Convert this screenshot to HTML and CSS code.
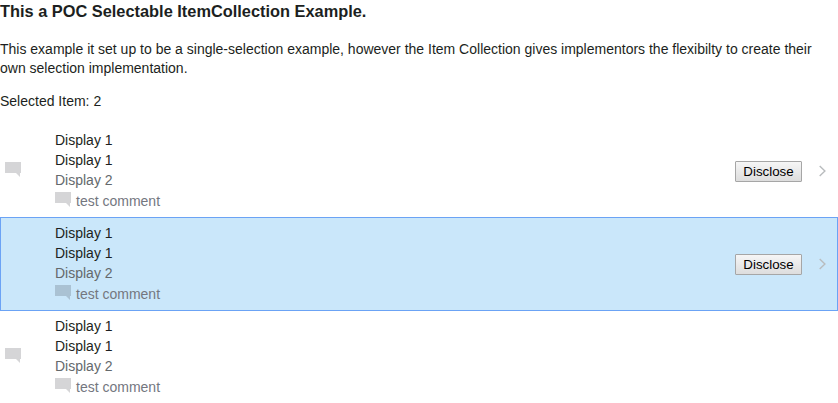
FILE: index.html
```
<!DOCTYPE html>
<html lang="en">
<head>
<meta charset="utf-8">
<title>Selectable ItemCollection</title>
<link rel="stylesheet" href="styles.css">
</head>
<body>
<h3 class="title">This a POC Selectable ItemCollection Example.</h3>
<p class="intro">This example it set up to be a single-selection example, however the Item Collection gives implementors the flexibilty to create their own selection implementation.</p>
<p class="status">Selected Item: 2</p>
<div class="list">
  <div class="item">
    <div class="lead"><svg class="comment" viewBox="0 0 16 16"><path d="M0 0h16v11h-1v4l-4-4H0z"/></svg></div>
    <div class="content"><div>Display 1</div><div>Display 1</div><div class="secondary">Display 2</div><div class="note"><svg class="comment" viewBox="0 0 16 16"><path d="M0 0h16v11h-1v4l-4-4H0z"/></svg><span>test comment</span></div></div>
    <button class="disclose">Disclose</button>
    <svg class="chevron" viewBox="0 0 8 12"><path d="M1.7 1l5.2 5-5.2 5"/></svg>
  </div>
  <div class="item selected">
    <div class="lead"></div>
    <div class="content"><div>Display 1</div><div>Display 1</div><div class="secondary">Display 2</div><div class="note"><svg class="comment" viewBox="0 0 16 16"><path d="M0 0h16v11h-1v4l-4-4H0z"/></svg><span>test comment</span></div></div>
    <button class="disclose">Disclose</button>
    <svg class="chevron" viewBox="0 0 8 12"><path d="M1.7 1l5.2 5-5.2 5"/></svg>
  </div>
  <div class="item">
    <div class="lead"><svg class="comment" viewBox="0 0 16 16"><path d="M0 0h16v11h-1v4l-4-4H0z"/></svg></div>
    <div class="content"><div>Display 1</div><div>Display 1</div><div class="secondary">Display 2</div><div class="note"><svg class="comment" viewBox="0 0 16 16"><path d="M0 0h16v11h-1v4l-4-4H0z"/></svg><span>test comment</span></div></div>
  </div>
</div>
</body>
</html>
```
FILE: styles.css
```
* { box-sizing: border-box; }
body { margin: 0; font: 14px/19px "Liberation Sans", Arial, sans-serif; color: #1c1f21; height: 403px; overflow: hidden; }
.title { margin: 0; font-size: 16.38px; line-height: 23px; }
.intro { margin: 17px 0 14px; }
.status { margin: 0 0 13px; }
.item { display: flex; align-items: center; height: 94px; margin-bottom: -1px; border: 1px solid transparent; padding: 0 11px 0 4px; }
.selected { background: #cae7fa; border-color: #6ba3f5; }
.lead { width: 50px; display: flex; padding-bottom: 2px; }
.content { flex: 1; line-height: 20px; }
.secondary { color: #64696c; }
.note { display: flex; align-items: center; gap: 5px; height: 22px; color: #74777f; }
.comment { width: 16px; height: 16px; fill: #1c1f2a; opacity: .18; }
.note .comment { margin-top: -3px; }
.disclose { width: 67px; height: 21px; padding: 0; font: 13.33px "Liberation Sans", Arial, sans-serif; color: #000; background: linear-gradient(#f6f6f6, #ddd); border: 1px solid #a6a6a6; border-radius: 1px; margin-right: 16px; }
.chevron { width: 8px; height: 12px; fill: none; stroke: #b9bcbe; stroke-width: 1.4; }
```
